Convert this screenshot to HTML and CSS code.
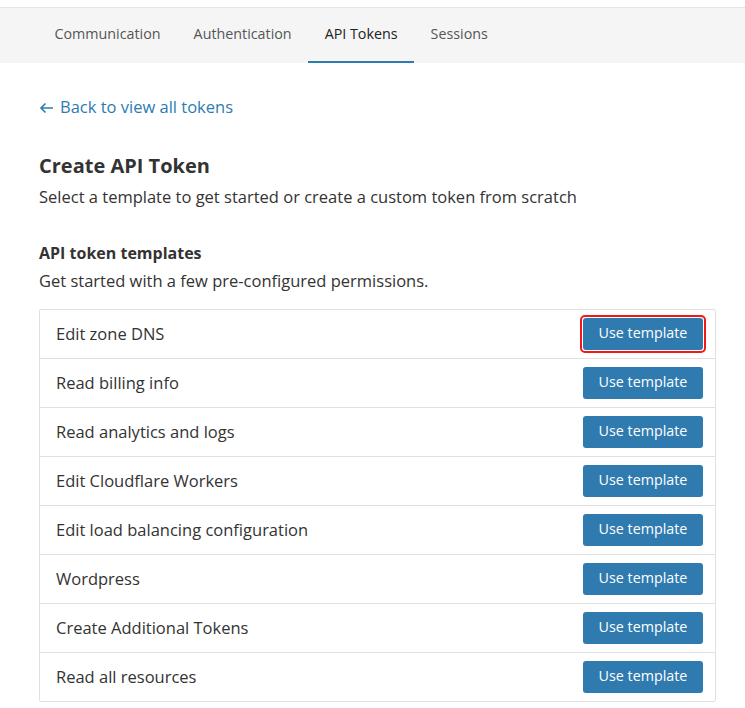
FILE: index.html
```html
<!DOCTYPE html>
<html>
<head>
<meta charset="utf-8">
<link rel="stylesheet" href="styles.css">
</head>
<body>
<div class="topgap"></div>
<nav class="tabs">
  <a class="tab">Communication</a>
  <a class="tab">Authentication</a>
  <a class="tab active">API Tokens</a>
  <a class="tab">Sessions</a>
</nav>
<main class="content">
  <a class="back"><svg class="arrow" width="15" height="12" viewBox="0 0 15 12"><path d="M14 6H2M6.5 1.5L2 6l4.5 4.5" fill="none" stroke="currentColor" stroke-width="1.6"/></svg>Back to view all tokens</a>
  <h1 class="title">Create API Token</h1>
  <p class="subtitle">Select a template to get started or create a custom token from scratch</p>
  <h2 class="section-title">API token templates</h2>
  <p class="section-desc">Get started with a few pre-configured permissions.</p>
  <div class="list">
    <div class="row"><span class="name">Edit zone DNS</span><span class="highlight"><button class="btn">Use template</button></span></div>
    <div class="row"><span class="name">Read billing info</span><button class="btn">Use template</button></div>
    <div class="row"><span class="name">Read analytics and logs</span><button class="btn">Use template</button></div>
    <div class="row"><span class="name">Edit Cloudflare Workers</span><button class="btn">Use template</button></div>
    <div class="row"><span class="name">Edit load balancing configuration</span><button class="btn">Use template</button></div>
    <div class="row"><span class="name">Wordpress</span><button class="btn">Use template</button></div>
    <div class="row"><span class="name">Create Additional Tokens</span><button class="btn">Use template</button></div>
    <div class="row"><span class="name">Read all resources</span><button class="btn">Use template</button></div>
  </div>
</main>
</body>
</html>
```
FILE: styles.css
```css
* { box-sizing: border-box; }
body {
  margin: 0;
  font-family: "Open Sans", "Noto Sans", sans-serif;
  color: #333;
  background: #fff;
}
.topgap { height: 7px; }
.tabs {
  display: flex;
  height: 56px;
  background: #f5f5f5;
  border-top: 1px solid #e6e6e6;
  padding-left: 38px;
}
.tab {
  display: flex;
  align-items: center;
  padding: 0 16.5px 3px;
  font-size: 14.3px;
  color: #555;
  border-bottom: 2px solid transparent;
}
.tab.active {
  color: #222;
  border-bottom-color: #2c7cb0;
}
.content {
  padding: 33px 29px 0 39px;
}
.back {
  display: flex;
  align-items: center;
  gap: 6px;
  color: #2c7cb0;
  font-size: 16.5px;
  line-height: 22px;
}
.arrow { flex: none; margin-top: 1px; }
.title {
  margin: 34px 0 0;
  font-size: 20px;
  font-weight: 700;
  line-height: 28px;
  color: #333;
}
.subtitle {
  margin: 6px 0 0;
  font-size: 16.5px;
  line-height: 22px;
}
.section-title {
  margin: 34px 0 0;
  font-size: 16px;
  font-weight: 700;
  line-height: 22px;
}
.section-desc {
  margin: 6px 0 0;
  font-size: 16.5px;
  line-height: 22px;
}
.list {
  margin-top: 17px;
  border: 1px solid #e0e0e0;
  border-radius: 2px;
}
.row {
  display: flex;
  align-items: center;
  justify-content: space-between;
  height: 49px;
  padding: 0 12px 0 16px;
  border-top: 1px solid #e0e0e0;
}
.row:first-child { border-top: none; height: 48px; }
.name {
  font-size: 16.5px;
  color: #333;
  padding-bottom: 2px;
}
.btn {
  width: 120px;
  height: 32px;
  border: none;
  border-radius: 3px;
  background: #2f7bb0;
  color: #fff;
  font-family: inherit;
  font-size: 14.3px;
  padding: 0 0 3px;
}
.highlight {
  display: flex;
  outline: 2px solid #f01818;
  outline-offset: 1px;
  border-radius: 2px;
}
```
